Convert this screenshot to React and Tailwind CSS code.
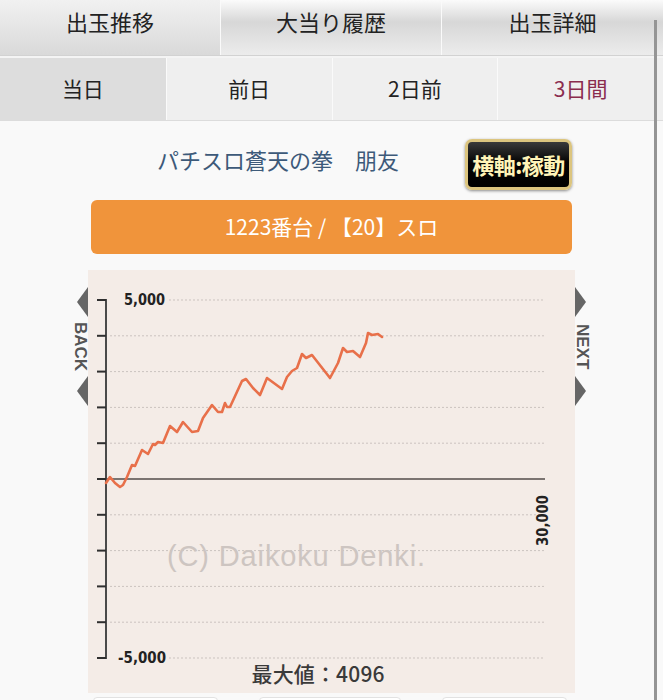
const points = [
  [106, 483], [110, 477], [115, 483], [120, 487], [123, 485], [127, 477], [132, 465], [135, 466],
  [142, 450], [148, 454], [153, 444], [155, 445], [158, 442], [163, 443], [170, 426], [177, 432],
  [183, 422], [192, 432], [198, 431], [203, 418], [212, 405], [218, 412], [222, 412], [225, 403],
  [227, 407], [230, 407], [242, 381], [246, 379], [253, 388], [260, 395], [267, 378], [282, 389],
  [287, 377], [292, 371], [297, 368], [302, 354], [306, 358], [312, 355], [330, 378], [338, 363],
  [343, 348], [347, 352], [353, 351], [360, 357], [363, 350], [366, 343], [368, 333], [372, 335],
  [378, 334], [382, 337],
]

const ticks = Array.from({ length: 11 }, (_, i) => 30 + i * 35.8)

const glossy = 'bg-[linear-gradient(#fbfbfb,#d7d7d7_40%,#ececec)]'

function Chart() {
  const line = points.map(([x, y]) => `${x - 88},${y - 270}`).join(' ')
  return (
    <svg width="487" height="423" viewBox="0 0 487 423" className="block">
      {ticks.map((y, i) =>
        i === 5 ? null : (
          <line
            key={i}
            x1={i === 0 || i === 10 ? 81 : 22}
            x2="457"
            y1={y}
            y2={y}
            stroke="#cbc3bf"
            strokeWidth="1"
            strokeDasharray="2 2"
          />
        )
      )}
      <line x1="18" x2="457" y1={ticks[5]} y2={ticks[5]} stroke="#7b7471" strokeWidth="2" />
      <line x1="18" x2="18" y1={ticks[0] - 1} y2={ticks[10] + 1} stroke="#4a4a4a" strokeWidth="2" />
      {ticks.map((y, i) => (
        <line key={i} x1="9" x2="18" y1={y} y2={y} stroke="#2f2f2f" strokeWidth="2" />
      ))}
      <text
        x="79"
        y="296"
        fontSize="29"
        fill="#cdc5c1"
        textLength="258"
        lengthAdjust="spacing"
        fontFamily="'Liberation Sans', Arial, sans-serif"
      >
        (C) Daikoku Denki.
      </text>
      <polyline
        points={line}
        fill="none"
        stroke="#e8704a"
        strokeWidth="2.6"
        strokeLinejoin="round"
        strokeLinecap="round"
      />
      <g fontFamily="'DejaVu Sans Condensed', 'DejaVu Sans', sans-serif" fontWeight="bold" fill="#222">
        <text x="36" y="35" fontSize="16" textLength="41" lengthAdjust="spacingAndGlyphs">
          5,000
        </text>
        <text x="30" y="393" fontSize="16" textLength="48" lengthAdjust="spacingAndGlyphs">
          -5,000
        </text>
        <text
          x="460"
          y="276"
          fontSize="15"
          textLength="51"
          lengthAdjust="spacingAndGlyphs"
          transform="rotate(-90 460 276)"
        >
          30,000
        </text>
      </g>
      <text
        x="230"
        y="412"
        fontSize="21"
        fill="#3a3a3a"
        fontWeight="500"
        textAnchor="middle"
        textLength="133"
        lengthAdjust="spacing"
        fontFamily="'Noto Sans CJK JP', sans-serif"
      >
        最大値：4096
      </text>
    </svg>
  )
}

function SideNav({ label, dir }) {
  const tri =
    dir === 'left'
      ? 'h-0 w-0 border-y-[15px] border-y-transparent border-r-[11px] border-r-[#666]'
      : 'h-0 w-0 border-y-[15px] border-y-transparent border-l-[11px] border-l-[#666]'
  return (
    <div className={`flex w-[15px] flex-col pt-[17px] ${dir === 'left' ? 'items-end' : 'items-start'}`}>
      <div className={tri} />
      <div className="mt-[6px] flex h-[48px] w-[15px] items-center justify-center text-[17px] font-bold leading-none text-[#555] [writing-mode:vertical-rl] font-['Liberation_Sans',Arial,sans-serif]">
        {label}
      </div>
      <div className={`mt-[5px] ${tri}`} />
    </div>
  )
}

export default function App() {
  return (
    <div className="relative min-h-screen w-[663px] overflow-hidden bg-[#f9f9f9] font-['Noto_Sans_CJK_JP',sans-serif]">
      <div className="grid h-[55px] grid-cols-[220px_221px_222px] text-[22px] text-[#222]">
        <div className="flex items-center justify-center bg-[linear-gradient(#f1f1f1,#d9d9d9)] pb-[12px]">出玉推移</div>
        <div className={`flex items-center justify-center border-l border-[#fafafa] pb-[12px] ${glossy}`}>大当り履歴</div>
        <div className={`flex items-center justify-center border-l border-[#fafafa] pb-[12px] ${glossy}`}>出玉詳細</div>
      </div>
      <div className="h-[3px] border-t border-[#d2d2d2] bg-[#f4f4f4]" />
      <div className="grid h-[63px] grid-cols-4 border-b border-[#dcdcdc] text-[21px] text-[#222]">
        <div className="flex items-center justify-center bg-[#dddddd]">当日</div>
        <div className="flex items-center justify-center border-l border-[#fafafa] bg-[#efefef]">前日</div>
        <div className="flex items-center justify-center border-l border-[#fafafa] bg-[#efefef]">2日前</div>
        <div className="flex items-center justify-center border-l border-[#fafafa] bg-[#efefef] text-[#8a2c4e]">3日間</div>
      </div>

      <div className="ml-[91px] mt-[17px] flex h-[52px] w-[481px] items-center">
        <div className="flex-1 pb-[10px] text-center text-[22px] text-[#3d5a79]">パチスロ蒼天の拳　朋友</div>
        <div className="flex h-[51px] w-[107px] items-center justify-center rounded-[7px] border-[3px] border-[#dcc57f] bg-[linear-gradient(#3a3a3a,#050505_45%,#000)] shadow-[0_1px_3px_rgba(0,0,0,0.45)]">
          <span className="text-[22px] font-bold leading-none tracking-[-0.5px] text-[#fff4b8]">横軸:稼動</span>
        </div>
      </div>

      <div className="ml-[91px] mt-[10px] flex h-[54px] w-[481px] items-center justify-center rounded-[6px] bg-[#f0943b] text-[21px] text-white">
        1223番台 / 【20】スロ
      </div>

      <div className="ml-[73px] mt-[16px] flex">
        <SideNav label="BACK" dir="left" />
        <div className="w-[487px] bg-[#f4ece7]">
          <Chart />
        </div>
        <SideNav label="NEXT" dir="right" />
      </div>

      <div className="ml-[93px] mt-[4px] flex w-[476px] gap-[41px]">
        <div className="h-[40px] w-[125px] rounded-[4px] border border-[#e2e2e2] bg-white" />
        <div className="h-[40px] w-[142px] rounded-[4px] border border-[#e2e2e2] bg-white" />
        <div className="h-[40px] w-[125px] rounded-[4px] border border-[#e2e2e2] bg-white" />
      </div>

      <div className="absolute right-[6px] top-[20px] h-[700px] w-[3px] bg-[#959595]" />
    </div>
  )
}
